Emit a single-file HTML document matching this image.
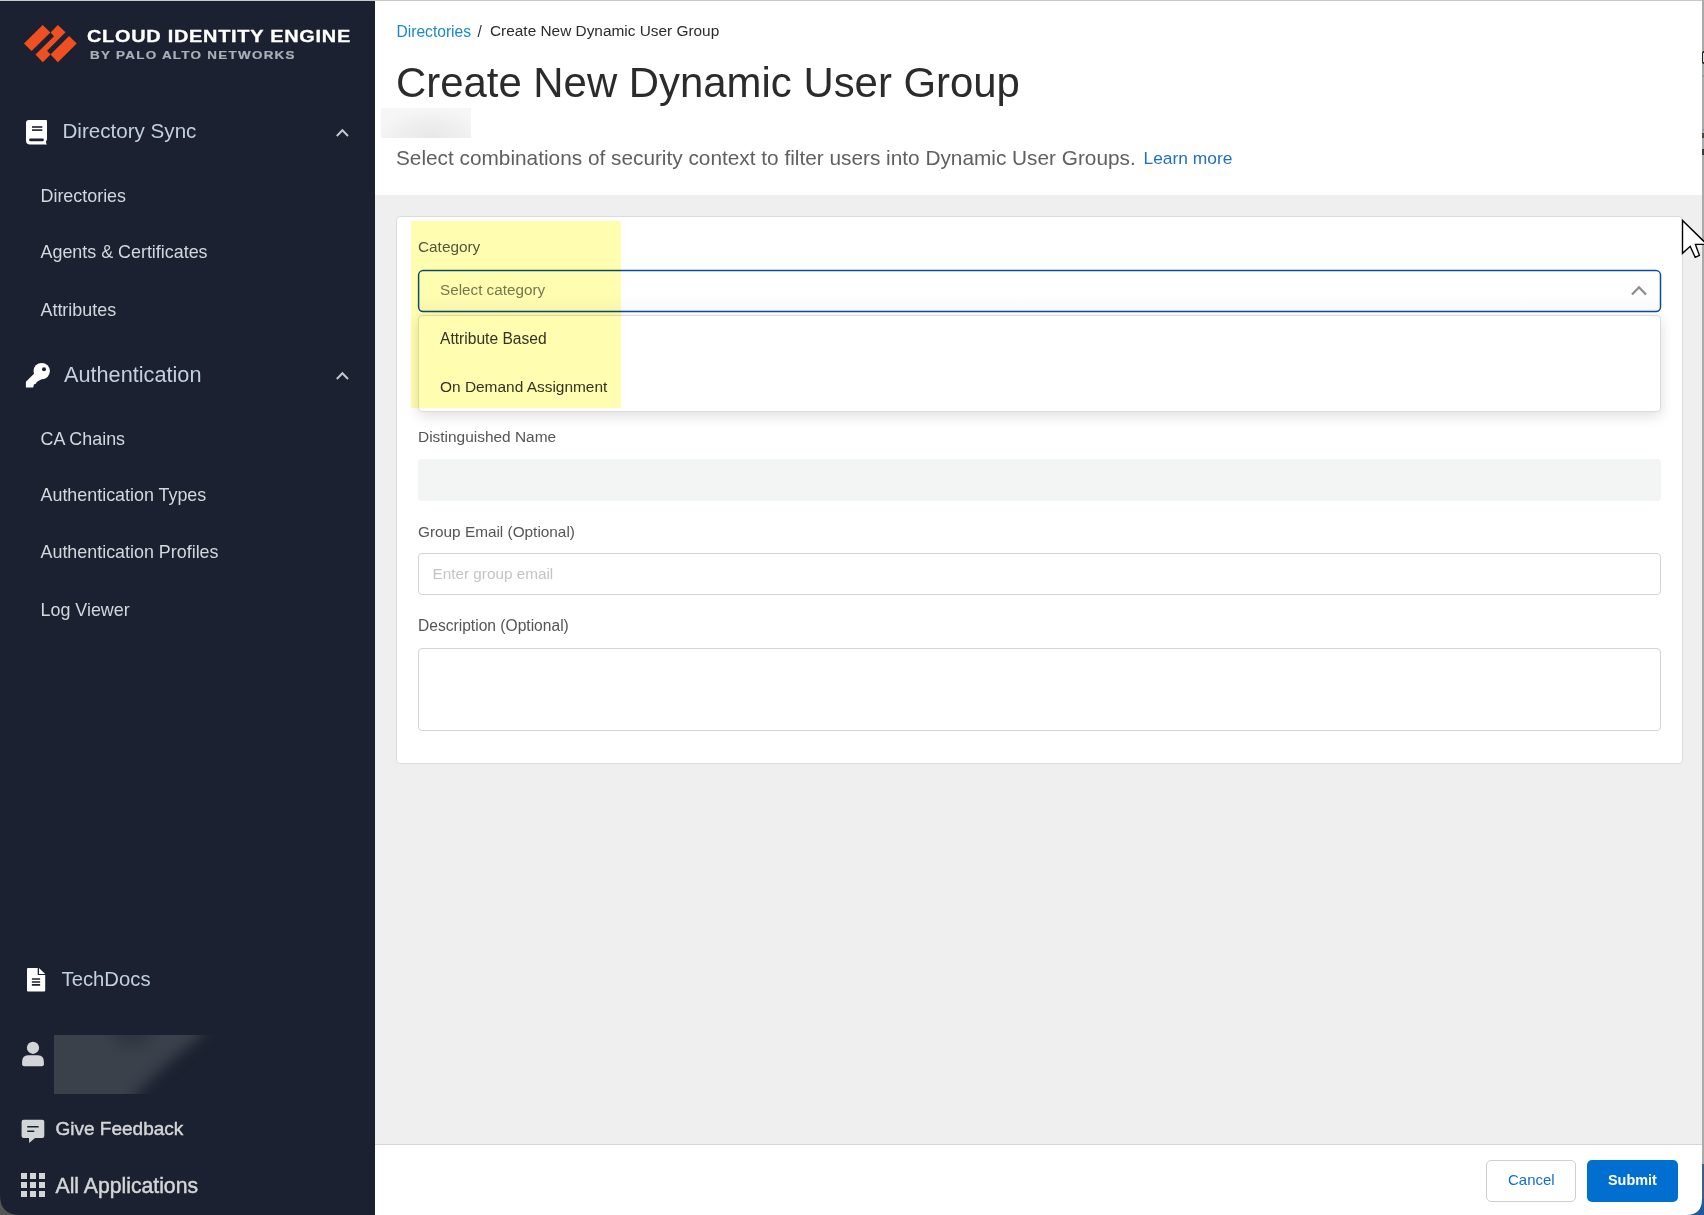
<!DOCTYPE html>
<html><head><meta charset="utf-8"><style>
html,body{margin:0;padding:0;width:1704px;height:1215px;overflow:hidden;background:#efefef}
.r{position:absolute}
.t{position:absolute;white-space:nowrap;line-height:1;font-family:"Liberation Sans", sans-serif}
</style></head><body>
<div class="r" style="left:0px;top:0px;width:1704px;height:1215px;background:#efefef"></div>
<div class="r" style="left:0px;top:0px;width:1704px;height:1px;background:#c9c9c9"></div>
<div class="r" style="left:0px;top:1px;width:375px;height:1214px;background:#1b2130"></div>
<div class="r" style="left:375px;top:1px;width:1327px;height:194px;background:#ffffff"></div>
<div class="r" style="left:375px;top:1144px;width:1327px;height:1px;background:#d6d6d6"></div>
<div class="r" style="left:375px;top:1145px;width:1327px;height:70px;background:#ffffff"></div>
<div class="r" style="left:1702px;top:0px;width:2px;height:1164px;background:#aaaaaa"></div>
<div class="r" style="left:1702px;top:1164px;width:2px;height:51px;background:#3e5f8a"></div>
<div class="r" style="left:1702px;top:51px;width:2px;height:13px;background:#222;border-radius:2px 0 0 2px"></div>
<div class="r" style="left:1703px;top:53px;width:1px;height:9px;background:#cfd8e0"></div>
<div class="r" style="left:1702px;top:75px;width:2px;height:2px;background:#8a9ab5"></div>
<div class="r" style="left:1702px;top:129px;width:2px;height:2px;background:#8a9ab5"></div>
<div class="r" style="left:1702px;top:133px;width:2px;height:5px;background:#484848"></div>
<div class="r" style="left:1702px;top:149px;width:2px;height:6px;background:#3a3a3a"></div>
<svg class="r" style="left:0;top:0" width="90" height="80" viewBox="0 0 90 80">
<g fill="#ef5022">
<polygon points="24,43.4 42.7,24.9 50.4,32.4 31.6,51"/>
<polygon points="57.9,24.9 65.5,32.3 47.1,50.7 50.5,54.4 42.8,62.2 35.5,54.6 54,36.2 50.6,32.6"/>
<polygon points="69.1,36.1 76.7,43.4 57.9,62.2 50.5,54.6"/>
</g></svg>
<div class="t" style="left:87.0px;top:28.32px;font-size:16.4px;color:#ffffff;font-weight:700;letter-spacing:0.6px;transform:scaleX(1.215);transform-origin:0 0;-webkit-text-stroke:0.3px #fff;">CLOUD IDENTITY ENGINE</div>
<div class="t" style="left:89.5px;top:50.80px;font-size:10.4px;color:#aab0b8;font-weight:700;letter-spacing:1.0px;transform:scaleX(1.29);transform-origin:0 0;-webkit-text-stroke:0.2px #aab0b8;">BY PALO ALTO NETWORKS</div>
<svg class="r" style="left:25px;top:119px" width="24" height="27" viewBox="0 0 24 27">
<path d="M4,1 H21 Q22,1 22,2 V20.5 Q21,21.5 21,23 Q21,24.5 22,25.5 H5 Q1,25.5 1,21.5 V4 Q1,1 4,1 Z" fill="#ffffff"/>
<rect x="7" y="7.2" width="10.3" height="1.6" fill="#1b2130"/>
<rect x="7" y="10.3" width="10.3" height="1.6" fill="#1b2130"/>
<rect x="4.2" y="19.4" width="14.6" height="2.8" rx="1.2" fill="#1b2130"/>
</svg>
<div class="t" style="left:62.5px;top:121.36px;font-size:20.6px;color:#c3d0de;font-weight:400;">Directory Sync</div>
<svg class="r" style="left:0;top:0;overflow:visible" width="1" height="1"><polyline points="336.8,136 342.4,130.2 348,136" fill="none" stroke="#c0c8d2" stroke-width="2" stroke-linecap="butt" stroke-linejoin="miter"/></svg>
<div class="t" style="left:40.5px;top:188.05px;font-size:17.9px;color:#d3d8de;font-weight:400;">Directories</div>
<div class="t" style="left:40.5px;top:244.25px;font-size:17.9px;color:#d3d8de;font-weight:400;">Agents &amp; Certificates</div>
<div class="t" style="left:40.5px;top:301.65px;font-size:17.9px;color:#d3d8de;font-weight:400;">Attributes</div>
<svg class="r" style="left:24px;top:361px" width="28" height="29" viewBox="0 0 28 29">
<circle cx="17.7" cy="10.1" r="8.2" fill="#fff"/>
<path d="M1.9,20.7 L11,11.8 L17.5,18.3 L12.7,21 L12.1,22.6 L9.9,23.6 L9.2,26.4 H1.9 Z" fill="#fff"/>
<circle cx="20" cy="8.2" r="2" fill="#1b2130"/>
</svg>
<div class="t" style="left:64.0px;top:363.63px;font-size:21.7px;color:#c3d0de;font-weight:400;">Authentication</div>
<svg class="r" style="left:0;top:0;overflow:visible" width="1" height="1"><polyline points="336.8,379 342.4,373.2 348,379" fill="none" stroke="#c0c8d2" stroke-width="2" stroke-linecap="butt" stroke-linejoin="miter"/></svg>
<div class="t" style="left:40.5px;top:430.85px;font-size:17.9px;color:#d3d8de;font-weight:400;">CA Chains</div>
<div class="t" style="left:40.5px;top:487.45px;font-size:17.9px;color:#d3d8de;font-weight:400;">Authentication Types</div>
<div class="t" style="left:40.5px;top:544.15px;font-size:17.9px;color:#d3d8de;font-weight:400;">Authentication Profiles</div>
<div class="t" style="left:40.5px;top:601.85px;font-size:17.9px;color:#d3d8de;font-weight:400;">Log Viewer</div>
<svg class="r" style="left:26px;top:967px" width="20" height="26" viewBox="0 0 20 26">
<path d="M2,1 H11.7 V8 H19.2 V23.5 Q19.2,24.5 18.2,24.5 H2 Q1,24.5 1,23.5 V2 Q1,1 2,1 Z" fill="#fff"/>
<path d="M13,1 L19.2,7 H13 Z" fill="#fff"/>
<rect x="5.8" y="11.2" width="8.4" height="1.6" rx="0.5" fill="#1b2130"/>
<rect x="5.8" y="14.2" width="8.4" height="1.6" rx="0.5" fill="#1b2130"/>
<rect x="5.8" y="17.1" width="8.4" height="1.6" rx="0.5" fill="#1b2130"/>
</svg>
<div class="t" style="left:61.5px;top:969.22px;font-size:20.3px;color:#c3d0de;font-weight:400;">TechDocs</div>
<svg class="r" style="left:21px;top:1041px" width="24" height="27" viewBox="0 0 24 27">
<circle cx="12" cy="6.8" r="6.1" fill="#d4d5d7"/>
<path d="M1.1,21 Q1.1,14.3 7,14.3 H17 Q22.9,14.3 22.9,21 V23.2 Q22.9,25.2 20.9,25.2 H3.1 Q1.1,25.2 1.1,23.2 Z" fill="#d4d5d7"/>
</svg>
<div class="r" style="left:54px;top:1035px;width:180px;height:59px;overflow:hidden">
<div class="r" style="left:-40px;top:-40px;width:300px;height:140px;filter:blur(7px)">
<svg width="300" height="140" viewBox="-40 -40 300 140"><polygon points="-40,-40 160,-40 148,0 112,30 82,59 70,100 -40,100" fill="#3a414b"/>
<polygon points="60,-40 100,-40 95,10 60,10" fill="#30363f"/></svg>
</div></div>
<svg class="r" style="left:21px;top:1119px" width="25" height="25" viewBox="0 0 25 25">
<path d="M2.6,0.7 H21.3 Q23.3,0.7 23.3,2.7 V17.1 Q23.3,19.1 21.3,19.1 H14 L8.2,23.9 L8,19.1 H2.6 Q0.6,19.1 0.6,17.1 V2.7 Q0.6,0.7 2.6,0.7 Z" fill="#d4d5d7"/>
<rect x="6.1" y="7.05" width="11.6" height="1.5" rx="0.5" fill="#1b2130"/>
<rect x="6.1" y="11.55" width="7.3" height="1.5" rx="0.5" fill="#1b2130"/>
</svg>
<div class="t" style="left:55.5px;top:1118.92px;font-size:19.0px;color:#d4d5d7;font-weight:400;-webkit-text-stroke:0.45px #d4d5d7;">Give Feedback</div>
<svg class="r" style="left:21px;top:1173px" width="25" height="25" viewBox="0 0 25 25"><rect x="0" y="0" width="6" height="6" fill="#d4d5d7"/><rect x="9" y="0" width="6" height="6" fill="#d4d5d7"/><rect x="18" y="0" width="6" height="6" fill="#d4d5d7"/><rect x="0" y="9" width="6" height="6" fill="#d4d5d7"/><rect x="9" y="9" width="6" height="6" fill="#d4d5d7"/><rect x="18" y="9" width="6" height="6" fill="#d4d5d7"/><rect x="0" y="18" width="6" height="6" fill="#d4d5d7"/><rect x="9" y="18" width="6" height="6" fill="#d4d5d7"/><rect x="18" y="18" width="6" height="6" fill="#d4d5d7"/></svg>
<div class="t" style="left:55.5px;top:1174.85px;font-size:21.2px;color:#d4d5d7;font-weight:400;-webkit-text-stroke:0.45px #d4d5d7;">All Applications</div>
<svg class="r" style="left:0;top:1195px" width="20" height="20" viewBox="0 0 20 20"><path d="M0,0 Q0,20 20,20 H0 Z" fill="#555"/></svg>
<svg class="r" style="left:1686px;top:1199px" width="18" height="16" viewBox="0 0 18 16"><path d="M16,0 Q16,16 0,16 H18 V0 Z" fill="#1f5a9a"/></svg>
<div class="t" style="left:396.5px;top:23.79px;font-size:15.6px;color:#1a8ac6;font-weight:400;">Directories</div>
<div class="t" style="left:477.5px;top:23.79px;font-size:15.6px;color:#333;font-weight:400;">/</div>
<div class="t" style="left:490.0px;top:23.46px;font-size:15.4px;color:#2b2b2b;font-weight:400;">Create New Dynamic User Group</div>
<div class="t" style="left:396.0px;top:62.33px;font-size:41.9px;color:#2b2b2b;font-weight:400;">Create New Dynamic User Group</div>
<div class="r" style="left:381px;top:108px;width:90px;height:30px;background:radial-gradient(ellipse 60% 90% at 55% 95%,#e8e8e8,#eeeeee 50%,#f6f6f6 100%);"></div>
<div class="t" style="left:396.0px;top:147.79px;font-size:20.8px;color:#606060;font-weight:400;">Select combinations of security context to filter users into Dynamic User Groups.</div>
<div class="t" style="left:1143.5px;top:150.47px;font-size:17.4px;color:#1f70c1;font-weight:400;">Learn more</div>
<div class="r" style="left:396px;top:216px;width:1287px;height:548px;background:#fff;border:1px solid #d9dcdc;border-radius:4px;box-sizing:border-box"></div>
<div class="t" style="left:418.0px;top:239.21px;font-size:15.35px;color:#555;font-weight:400;">Category</div>
<svg class="r" style="left:0;top:0;overflow:visible" width="1" height="1"><defs><linearGradient id="sg" x1="0" y1="0" x2="0" y2="1"><stop offset="0.6" stop-color="#fff"/><stop offset="1" stop-color="#f8f8f8"/></linearGradient></defs>
<rect x="418.6" y="270.6" width="1241.9" height="40.9" rx="4.5" fill="url(#sg)" stroke="#0a4c9e" stroke-width="1.5"/></svg>
<div class="t" style="left:440.0px;top:282.09px;font-size:15.25px;color:#777;font-weight:400;">Select category</div>
<svg class="r" style="left:0;top:0;overflow:visible" width="1" height="1"><polyline points="1632,294.5 1639,287.3 1646,294.5" fill="none" stroke="#8c8c8c" stroke-width="2.3" stroke-linecap="butt" stroke-linejoin="miter"/></svg>
<div class="r" style="left:418px;top:315px;width:1243px;height:97px;background:#fff;border:1px solid #dcdcdc;border-radius:4px;box-sizing:border-box;box-shadow:0 4px 14px rgba(0,0,0,0.13)"></div>
<div class="t" style="left:440.0px;top:330.79px;font-size:15.6px;color:#333;font-weight:400;">Attribute Based</div>
<div class="t" style="left:440.0px;top:378.92px;font-size:15.45px;color:#333;font-weight:400;">On Demand Assignment</div>
<div class="t" style="left:418.0px;top:428.92px;font-size:15.45px;color:#555;font-weight:400;">Distinguished Name</div>
<div class="r" style="left:418px;top:459px;width:1243px;height:42px;background:#f3f4f4;border-radius:4px"></div>
<div class="t" style="left:418.0px;top:524.01px;font-size:15.35px;color:#555;font-weight:400;">Group Email (Optional)</div>
<div class="r" style="left:418px;top:553px;width:1243px;height:42px;background:#fff;border:1px solid #d4d4d4;border-radius:4px;box-sizing:border-box"></div>
<div class="t" style="left:432.5px;top:566.05px;font-size:15.3px;color:#c4c4c4;font-weight:400;">Enter group email</div>
<div class="t" style="left:418.0px;top:617.79px;font-size:15.6px;color:#555;font-weight:400;">Description (Optional)</div>
<div class="r" style="left:418px;top:648px;width:1243px;height:83px;background:#fff;border:1px solid #d4d4d4;border-radius:4px;box-sizing:border-box"></div>
<div class="r" style="left:411px;top:221px;width:210px;height:187px;background:#fffdb0;mix-blend-mode:multiply"></div>
<div class="r" style="left:1486px;top:1160px;width:90px;height:42px;background:#fff;border:1px solid #cfcfcf;border-radius:5px;box-sizing:border-box"></div>
<div class="t" style="left:1508.0px;top:1172.30px;font-size:15.0px;color:#0f6fcc;font-weight:400;">Cancel</div>
<div class="r" style="left:1587px;top:1160px;width:91px;height:42px;background:#006fcf;border-radius:5px"></div>
<div class="t" style="left:1608.0px;top:1172.81px;font-size:14.4px;color:#ffffff;font-weight:700;">Submit</div>
<svg class="r" style="left:0;top:0;overflow:visible" width="1" height="1">
<path d="M1682.5,220.5 L1682.5,253.3 L1690.2,246.3 L1695.2,257.3 L1699.4,255.3 L1695.4,244.4 L1707,244.4 Z" fill="#fff" stroke="#000" stroke-width="1.4" stroke-linejoin="miter"/>
</svg>
</body></html>
